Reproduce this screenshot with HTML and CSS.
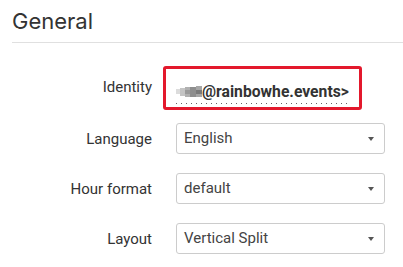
FILE: index.html
```html
<!DOCTYPE html>
<html lang="en">
<head>
    <meta charset="UTF-8">
    <meta name="viewport" content="width=device-width, initial-scale=1.0">
    <title>Settings - General</title>
    <link rel="stylesheet" href="styles.css">
</head>
<body>
    <div class="settings">
        <h1>General</h1>
        <div class="form">
            <label class="label">Identity</label>
            <div class="field">
                <div class="identity-box">
                    <span class="identity">
                        <svg class="blur" width="26" height="12" viewBox="0 0 26 12">
                            <rect x="0" y="3" width="4" height="5" fill="#dcdcdc"/>
                            <rect x="4" y="2" width="5" height="8" fill="#c4c4c4"/>
                            <rect x="9" y="1" width="5" height="10" fill="#b0b0b0"/>
                            <rect x="14" y="1" width="6" height="10" fill="#8e8e8e"/>
                            <rect x="20" y="0" width="6" height="11" fill="#a6a6a6"/>
                            <rect x="9" y="4" width="5" height="4" fill="#9a9a9a"/>
                            <rect x="20" y="4" width="6" height="4" fill="#7a7a7a"/>
                        </svg>@rainbowhe.events&gt;
                    </span>
                </div>
            </div>

            <label class="label">Language</label>
            <div class="field">
                <div class="select">English<span class="caret"></span></div>
            </div>

            <label class="label">Hour format</label>
            <div class="field">
                <div class="select">default<span class="caret"></span></div>
            </div>

            <label class="label">Layout</label>
            <div class="field">
                <div class="select">Vertical Split<span class="caret"></span></div>
            </div>
        </div>
    </div>
</body>
</html>
```

FILE: styles.css
```css
body {
    margin: 0;
    background-color: #fff;
    font-family: Roboto, "Liberation Sans", sans-serif;
    color: #333;
}

.settings {
    padding: 7px 0 0 12px;
}

h1 {
    margin: 0;
    padding-bottom: 7px;
    font-family: Inter, Roboto, sans-serif;
    font-weight: 400;
    font-size: 22px;
    line-height: 28px;
    color: #333;
    border-bottom: 1px solid #e0e0e0;
}

.form {
    display: grid;
    grid-template-columns: 140px 209px;
    column-gap: 24px;
    row-gap: 19px;
    align-items: center;
    padding-top: 27px;
}

.label {
    text-align: right;
    font-size: 15px;
    color: #333;
}

.identity-box {
    box-sizing: border-box;
    margin: -4px 0 -6px -13px;
    width: 199px;
    height: 44px;
    border: 3px solid #e3182c;
    border-radius: 3px;
    padding: 0 0 0 10px;
}

.identity {
    display: flex;
    align-items: center;
    margin-top: 13px;
    width: 174px;
    height: 19px;
    font-size: 15.7px;
    font-weight: 700;
    color: #333;
    background-image: linear-gradient(to right, #666 1px, transparent 1px);
    background-size: 5px 1px;
    background-repeat: repeat-x;
    background-position: 0 bottom;
    padding-bottom: 3px;
}

.blur {
    flex: none;
}

.select {
    position: relative;
    height: 29px;
    line-height: 29px;
    border: 1px solid #ccc;
    border-radius: 3px;
    padding-left: 7px;
    font-size: 15px;
    color: #444;
}

.caret {
    position: absolute;
    right: 10px;
    top: 13px;
    border-left: 3px solid transparent;
    border-right: 3px solid transparent;
    border-top: 4px solid #555;
}
```
